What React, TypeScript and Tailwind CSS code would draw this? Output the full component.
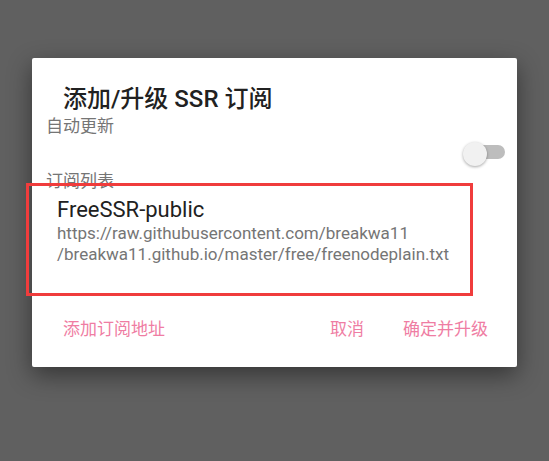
const cjk = "font-['Roboto','Noto_Sans_CJK_SC',sans-serif]"

function Toggle() {
  return (
    <div className="relative h-[25px] w-[42px]">
      <div className="absolute left-[12px] top-[3px] h-[14px] w-[30px] rounded-full bg-[#bdbdbd]" />
      <div className="absolute left-0 top-0 h-[24px] w-[24px] rounded-full bg-[#f1f1f1] shadow-[0_1px_3px_rgba(0,0,0,0.35)]" />
    </div>
  )
}

export default function App() {
  return (
    <div className={`relative h-[461px] w-[549px] overflow-hidden bg-[#606060] pl-[32px] pt-[58px] ${cjk}`}>
      <div className="flex h-[309px] w-[485px] flex-col rounded-[2px] bg-white shadow-[0_8px_24px_rgba(0,0,0,0.45)]">
        <h1 className="pl-[31px] pt-[27px] text-[24px] leading-[28px] font-medium text-[#212121]">
          添加/升级 SSR 订阅
        </h1>
        <div className="mt-[3px] pl-[14px] text-[17px] leading-[20px] text-[#757575]">自动更新</div>
        <div className="mt-[6px] flex justify-end pr-[12px]">
          <Toggle />
        </div>
        <div className="mt-[4px] pl-[14px] text-[17px] leading-[20px] text-[#757575]">订阅列表</div>
        <div className="mt-[6px] pl-[25px]">
          <div className="text-[22px] leading-[26px] text-[#212121]">FreeSSR-public</div>
          <div className="text-[17px] leading-[21px] text-[#757575]">
            <div>https://raw.githubusercontent.com/breakwa11</div>
            <div>/breakwa11.github.io/master/free/freenodeplain.txt</div>
          </div>
        </div>
        <div className="mt-auto flex items-center pb-[28px] pl-[31px] pr-[29px] text-[17px] leading-[20px] text-[#ef7da3]">
          <span>添加订阅地址</span>
          <span className="ml-auto">取消</span>
          <span className="ml-[39px]">确定并升级</span>
        </div>
      </div>
      <div className="absolute left-[26px] top-[183px] h-[113px] w-[447px] border-[3px] border-[#f03c3c]" />
    </div>
  )
}
